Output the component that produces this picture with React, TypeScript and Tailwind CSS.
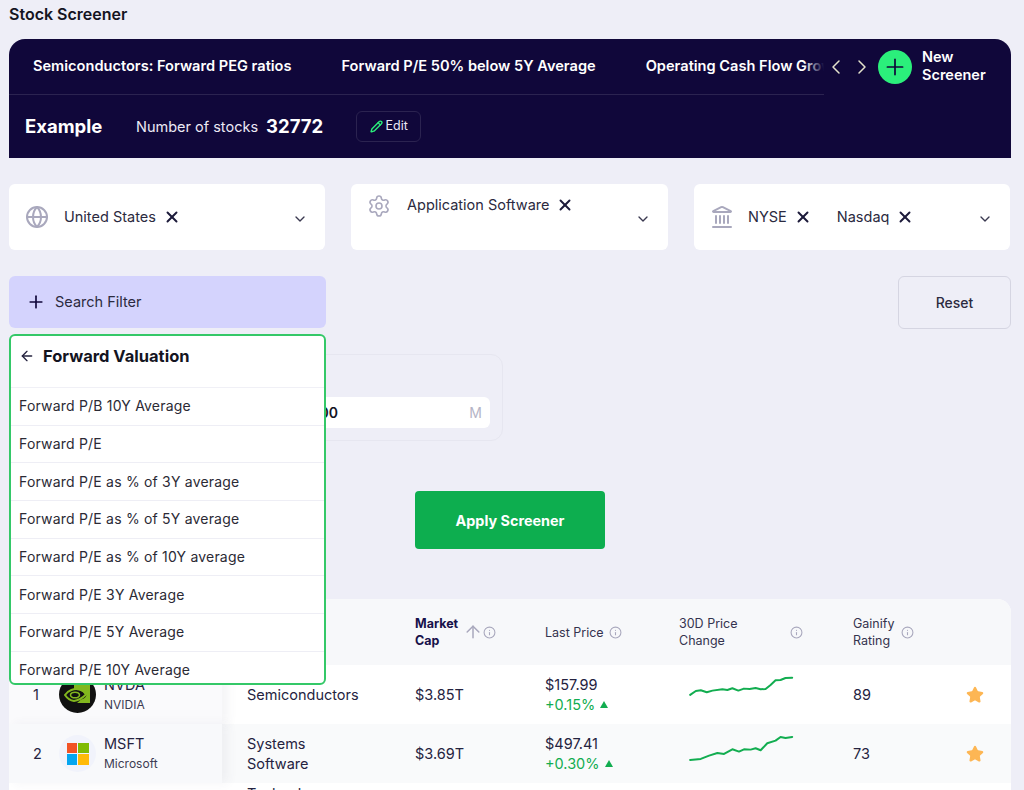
import { ArrowLeft, ArrowUp, ChevronDown, ChevronLeft, ChevronRight, Globe, Info, Landmark, Pencil, Plus, Settings, Star, X } from "lucide-react"
import type { ReactNode } from "react"

const presets = ["Semiconductors: Forward PEG ratios", "Forward P/E 50% below 5Y Average", "Operating Cash Flow Growth"]

const menuItems = [
  "Forward P/B 10Y Average",
  "Forward P/E",
  "Forward P/E as % of 3Y average",
  "Forward P/E as % of 5Y average",
  "Forward P/E as % of 10Y average",
  "Forward P/E 3Y Average",
  "Forward P/E 5Y Average",
  "Forward P/E 10Y Average",
]

function Chip({ label }: { label: string }) {
  return (
    <span className="flex items-center gap-[7px] text-[14.5px] text-[#2b2a40]">
      {label}
      <X size={18} strokeWidth={2.6} className="text-[#1c1a3a]" />
    </span>
  )
}

function FilterBox({ icon, children, top, iconWidth }: { icon: ReactNode; children: ReactNode; top?: boolean; iconWidth: string }) {
  return (
    <div className={`flex h-[66px] rounded-md bg-white pl-[16px] pr-[17px] ${top ? "items-start pt-[10px]" : "items-center"}`}>
      <span className={`shrink-0 text-[#a9a8bd] ${iconWidth}`}>{icon}</span>
      <div className="flex flex-1 items-center gap-[25px]">{children}</div>
      <ChevronDown size={16} className={`text-[#3a3950] ${top ? "mt-[17px]" : "mt-[3px]"}`} />
    </div>
  )
}

function Tip() {
  return <Info size={13} className="shrink-0 text-[#a9a8bd]" />
}

function NvidiaLogo() {
  return (
    <svg viewBox="0 0 37 37" className="h-[37px] w-[37px]">
      <circle cx="18.5" cy="18.5" r="18.5" fill="#111" />
      <path d="M15 9H31V27H18L22 23.5C24.5 23 27 21.5 27.5 19C25 15.5 20 13.5 15 14Z" fill="#82b71e" />
      <path d="M6 19C9 14.5 15 12 21 13.5C24 14.5 26 16.5 27 18.5C24 21.5 20 24.5 15 25C11 24.5 8 22 6 19Z" fill="none" stroke="#82b71e" strokeWidth="2" />
      <ellipse cx="16" cy="19" rx="4.5" ry="2.8" fill="none" stroke="#82b71e" strokeWidth="1.6" />
    </svg>
  )
}

function MicrosoftLogo() {
  return (
    <div className="flex h-[37px] w-[37px] items-center justify-center rounded-full bg-[#f1f3fb]">
      <div className="grid grid-cols-2 gap-[1px]">
        <span className="h-[10.5px] w-[10.5px] bg-[#f25325]" />
        <span className="h-[10.5px] w-[10.5px] bg-[#80bb03]" />
        <span className="h-[10.5px] w-[10.5px] bg-[#05a6f0]" />
        <span className="h-[10.5px] w-[10.5px] bg-[#ffba08]" />
      </div>
    </div>
  )
}

function Spark({ box, points, className }: { box: string; points: string; className: string }) {
  return (
    <svg viewBox={box} className={`ml-[10px] self-start ${className}`}>
      <polyline points={points} fill="none" stroke="#12ad50" strokeWidth="6" strokeLinejoin="round" strokeLinecap="round" />
    </svg>
  )
}

const rowGrid = "grid grid-cols-[213px_193px_130px_134px_174px_113px_1fr]"

function Row({ rank, logo, ticker, name, industry, cap, price, change, spark, rating, bg, stickyBg }: {
  rank: string
  logo: ReactNode
  ticker: string
  name: string
  industry: ReactNode
  cap: string
  price: string
  change: string
  spark: ReactNode
  rating: string
  bg: string
  stickyBg: string
}) {
  return (
    <div className={`${rowGrid} h-[59px] items-center text-[14.5px] text-[#25233f] ${bg}`}>
      <div className={`relative z-10 flex h-full items-center shadow-[6px_0_10px_rgba(60,60,110,0.06)] ${stickyBg}`}>
        <span className="w-[50px] pl-[24px]">{rank}</span>
        {logo}
        <div className="ml-[8px]">
          <div className="leading-[20px]">{ticker}</div>
          <div className="text-[12px] leading-[20px] text-[#3d3c52]">{name}</div>
        </div>
      </div>
      <div className="pl-[25px] leading-[20px]">{industry}</div>
      <div>{cap}</div>
      <div>
        <div className="leading-[20px]">{price}</div>
        <div className="flex items-center gap-[5px] leading-[20px] text-[#12ad50]">
          {change}
          <svg viewBox="0 0 8 7" className="h-[7px] w-[8px]"><path d="M4 0L8 7H0Z" fill="#12ad50" /></svg>
        </div>
      </div>
      {spark}
      <div>{rating}</div>
      <div>
        <Star size={18} fill="#fdb654" stroke="#fdb654" />
      </div>
    </div>
  )
}

export default function App() {
  return (
    <div className="relative h-[790px] w-[1024px] overflow-hidden bg-[#eeeef7] font-['Inter',sans-serif]">
      <h1 className="flex h-[39px] items-start pl-[9px] pt-[4px] text-[16px] font-semibold leading-[20px] text-[#14141f]">Stock Screener</h1>

      <div className="mx-[9px] h-[119px] w-[1002px] rounded-t-[16px] bg-[#10073a] text-white">
        <div className="flex h-[56px]">
          <div className="relative flex w-[815px] items-center gap-[50px] overflow-hidden whitespace-nowrap border-b border-[#2b2350] pl-[24px] pt-[1px] text-[14.6px] font-semibold">
            {presets.map((preset) => (
              <span key={preset}>{preset}</span>
            ))}
            <div className="absolute right-0 top-0 h-[54px] w-[20px] bg-gradient-to-r from-transparent to-[#10073a]" />
          </div>
          <div className="flex items-start pt-[11px]">
            <ChevronLeft size={24} strokeWidth={1.5} className="mt-[5px] text-[#e4e2cc]" />
            <ChevronRight size={24} strokeWidth={1.5} className="ml-[2px] mt-[5px] text-[#e4e2cc]" />
            <span className="ml-[4px] flex h-[34px] w-[34px] items-center justify-center rounded-full bg-[#2bef7b] text-[#10073a]">
              <Plus size={26} strokeWidth={1.6} />
            </span>
            <span className="ml-[10px] -mt-[2px] text-[14.5px] font-semibold leading-[18px]">New<br />Screener</span>
          </div>
        </div>
        <div className="flex h-[63px] items-center">
          <span className="ml-[16px] w-[111px] text-[18.5px] font-bold">Example</span>
          <span className="text-[14.5px] text-[#ece9f5]">Number of stocks</span>
          <span className="ml-[8px] text-[18.5px] font-bold">32772</span>
          <button className="ml-[33px] flex h-[31px] w-[65px] items-center justify-center gap-[3px] rounded-md border border-[#2b2350] text-[12.5px] text-[#ece9f5]">
            <Pencil size={13} strokeWidth={2.5} className="text-[#2bef7b]" />
            Edit
          </button>
        </div>
      </div>

      <div className="ml-[9px] mt-[26px] grid w-[1001px] grid-cols-[316px_317px_316px] gap-[26px]">
        <FilterBox iconWidth="w-[39px]" icon={<Globe size={24} strokeWidth={2} />}>
          <Chip label="United States" />
        </FilterBox>
        <FilterBox top iconWidth="w-[40px]" icon={<Settings size={24} strokeWidth={1.6} />}>
          <Chip label="Application Software" />
        </FilterBox>
        <FilterBox iconWidth="w-[38px]" icon={<Landmark size={24} strokeWidth={2} />}>
          <Chip label="NYSE" />
          <Chip label="Nasdaq" />
        </FilterBox>
      </div>

      <div className="mx-[9px] mt-[26px] flex w-[1002px] justify-between">
        <div className="flex h-[52px] w-[317px] items-center gap-[9px] rounded-md bg-[#d4d3fd] pl-[17px] text-[14.5px] text-[#2b2a40]">
          <Plus size={20} strokeWidth={2} className="text-[#10073a]" />
          Search Filter
        </div>
        <button className="h-[53px] w-[113px] rounded-md border border-[#d5d5e2] text-[14px] font-medium text-[#2b2a40]">Reset</button>
      </div>

      <div className="ml-[9px] mt-[25px] h-[87px] w-[494px] rounded-xl border border-[#e6e6f0] pl-[12px] pr-[12px] pt-[42px]">
        <div className="flex h-[31px] items-center rounded-md bg-white pr-[8px] text-[14px] font-semibold text-[#14141f]">
          <span className="w-[316px] text-right">1000</span>
          <span className="ml-auto text-[14px] font-normal text-[#b5b4c6]">M</span>
        </div>
      </div>

      <div className="mt-[50px] flex justify-center pr-[4px]">
        <button className="h-[58px] w-[190px] rounded bg-[#0dae4f] pt-[1px] text-[14.4px] font-bold text-white">Apply Screener</button>
      </div>

      <div className="ml-[9px] mt-[50px] w-[1002px] overflow-hidden rounded-t-[14px] bg-white">
        <div className={`${rowGrid} h-[66px] items-center bg-[#f7f8fa] text-[12.5px] leading-[17px] text-[#34334e]`}>
          <div />
          <div />
          <div className="flex items-center">
            <span className="w-[48px] text-[12.5px] font-bold text-[#17114a]">Market Cap</span>
            <ArrowUp size={20} strokeWidth={1.8} className="text-[#a9a8bd]" />
            <Tip />
          </div>
          <div className="flex items-center gap-[5px]">
            <span>Last Price</span>
            <Tip />
          </div>
          <div className="flex items-center">
            <span className="w-[70px]">30D Price Change</span>
            <span className="ml-[41px]"><Tip /></span>
          </div>
          <div className="flex items-center">
            <span className="w-[48px]">Gainify Rating</span>
            <Tip />
          </div>
        </div>
        <Row
          rank="1"
          logo={<NvidiaLogo />}
          ticker="NVDA"
          name="NVIDIA"
          industry="Semiconductors"
          cap="$3.85T"
          price="$157.99"
          change="+0.15%"
          rating="89"
          bg="bg-white"
          stickyBg="bg-[#fafafc]"
          spark={
            <Spark
              box="530 255 315 65"
              className="mt-[10px] h-[21.6px] w-[105px]"
              points="533,315 550,303 565,301 583,307 600,302 630,298 645,300 660,295 678,302 695,296 712,297 730,294 745,298 760,297 775,285 790,271 805,270 820,264 840,263"
            />
          }
        />
        <Row
          rank="2"
          logo={<MicrosoftLogo />}
          ticker="MSFT"
          name="Microsoft"
          industry={<>Systems<br />Software</>}
          cap="$3.69T"
          price="$497.41"
          change="+0.30%"
          rating="73"
          bg="bg-[#f9fafb]"
          stickyBg="bg-[#f8f9fb]"
          spark={
            <Spark
              box="530 435 315 80"
              className="mt-[11px] h-[26.6px] w-[105px]"
              points="533,510 565,507 590,497 615,489 635,492 660,478 680,485 695,478 715,479 730,475 745,481 765,460 790,452 805,441 820,444 840,441"
            />
          }
        />
        <div className={`${rowGrid} text-[14.5px] leading-[20px] text-[#25233f]`}>
          <div />
          <div className="pl-[25px] pt-[1px]">Technology<br />Hardware</div>
        </div>
      </div>

      {/* metric picker opened from Search Filter, sits over the content below */}
      <div className="absolute left-[9px] top-[334px] z-20 h-[351px] w-[317px] overflow-hidden rounded-md border-2 border-[#34c868] bg-white">
        <div className="flex h-[52px] items-start gap-[8px] border-b border-[#f0f0f6] pl-[8px] pt-[10px]">
          <ArrowLeft size={16} className="mt-[2px] text-[#25233f]" />
          <span className="text-[16.5px] font-bold leading-[20px] text-[#14141f]">Forward Valuation</span>
        </div>
        {menuItems.map((item) => (
          <div key={item} className="flex h-[37.7px] items-center border-b border-[#eeeef5] pb-[1px] pl-[8px] text-[14px] tracking-[0.2px] text-[#2b2a35]">
            {item}
          </div>
        ))}
      </div>
    </div>
  )
}
